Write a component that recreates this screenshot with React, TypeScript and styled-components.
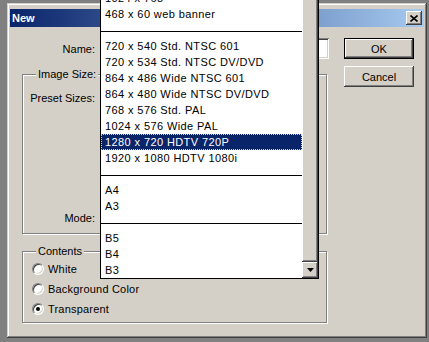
import React from 'react';
import styled, { createGlobalStyle } from 'styled-components';

const GlobalStyle = createGlobalStyle`
  html, body {
    margin: 0;
    padding: 0;
    background: #808080;
  }
  body {
    font-family: "Liberation Sans", Arial, sans-serif;
    font-size: 11px;
    color: #000;
  }
  #root {
    width: 429px;
    height: 342px;
    overflow: hidden;
    padding-top: 3px;
    box-sizing: border-box;
  }
`;

const raised = `
  box-shadow: inset -1px -1px #404040, inset 1px 1px #fff,
    inset -2px -2px #808080, inset 2px 2px #d4d0c8;
`;

const sunken = `
  box-shadow: inset 1px 1px #808080, inset -1px -1px #fff,
    inset 2px 2px #404040, inset -2px -2px #d4d0c8;
`;

const Dialog = styled.div`
  position: relative;
  box-sizing: border-box;
  width: 420px;
  height: 335px;
  margin-left: 7px;
  padding: 6px 3px 3px;
  background: #d4d0c8;
  box-shadow: inset -1px -1px #404040, inset 1px 1px #d4d0c8,
    inset -2px -2px #808080, inset 2px 2px #fff;
`;

const TitleBar = styled.div`
  height: 18px;
  display: flex;
  align-items: center;
  justify-content: space-between;
  padding: 0 2px;
  background: linear-gradient(to right, #0a246a, #a6caf0);
  color: #fff;
  font-weight: bold;
`;

const CloseButton = styled.button`
  width: 16px;
  height: 14px;
  padding: 0;
  border: none;
  background: #d4d0c8;
  display: flex;
  align-items: center;
  justify-content: center;
  ${raised}
`;

const Body = styled.div`
  display: flex;
`;

const LeftCol = styled.div`
  width: 334px;
  padding-top: 11px;
`;

const Row = styled.div<{ $indent?: number }>`
  display: flex;
  align-items: center;
  height: 21px;
  gap: 5px;
  padding-left: ${(p) => p.$indent ?? 0}px;
`;

const Label = styled.label<{ $w: number }>`
  width: ${(p) => p.$w}px;
  flex-shrink: 0;
  text-align: right;
  white-space: nowrap;
`;

// fields under the open list are left empty: the list hides them
const TextField = styled.div<{ $w: number }>`
  box-sizing: border-box;
  width: ${(p) => p.$w}px;
  height: 21px;
  background: #fff;
  ${sunken}
`;

const Group = styled.fieldset<{ $top: number }>`
  box-sizing: border-box;
  width: 305px;
  margin: ${(p) => p.$top}px 0 0 12px;
  padding: 0;
  border: 1px solid #808080;
  box-shadow: 1px 1px 0 #fff, inset 1px 1px 0 #fff;
  min-inline-size: 0;
`;

const Legend = styled.legend`
  margin-left: 13px;
  padding: 0 2px;
  line-height: 13px;
  background: #d4d0c8;
`;

const GroupRows = styled.div<{ $pt: number; $pb: number; $gap: number }>`
  display: flex;
  flex-direction: column;
  gap: ${(p) => p.$gap}px;
  padding: ${(p) => p.$pt}px 0 ${(p) => p.$pb}px;
`;

const RadioRow = styled.div`
  display: flex;
  align-items: center;
  height: 16px;
  padding-left: 9px;
  gap: 4px;
  letter-spacing: 0.2px;
`;

const RadioCircle = styled.span<{ $checked?: boolean }>`
  box-sizing: border-box;
  width: 12px;
  height: 12px;
  border-radius: 50%;
  background: #fff;
  border: 1px solid;
  border-color: #808080 #fff #fff #808080;
  box-shadow: inset 1px 1px #404040, inset -1px -1px #d4d0c8;
  display: flex;
  align-items: center;
  justify-content: center;
  &::after {
    content: '';
    display: ${(p) => (p.$checked ? 'block' : 'none')};
    width: 4px;
    height: 4px;
    border-radius: 50%;
    background: #000;
  }
`;

const RightCol = styled.div`
  display: flex;
  flex-direction: column;
  gap: 7px;
  padding-top: 11px;
`;

const PushButton = styled.button<{ $default?: boolean }>`
  box-sizing: border-box;
  width: 70px;
  height: 21px;
  padding: 0;
  font: inherit;
  color: #000;
  background: #d4d0c8;
  border: ${(p) => (p.$default ? '1px solid #000' : 'none')};
  ${raised}
`;

const DropList = styled.div`
  position: absolute;
  left: 93px;
  top: -14px;
  width: 219px;
  box-sizing: border-box;
  border: 1px solid #000;
  background: #fff;
  display: flex;
`;

const Items = styled.div`
  flex: 1;
`;

const Item = styled.div<{ $selected?: boolean }>`
  box-sizing: border-box;
  height: 16px;
  line-height: 16px;
  padding-left: 4px;
  letter-spacing: 0.4px;
  white-space: nowrap;
  background: ${(p) => (p.$selected ? '#0a246a' : 'transparent')};
  color: ${(p) => (p.$selected ? '#fff' : '#000')};
  outline: ${(p) => (p.$selected ? '1px dotted #e8d48c' : 'none')};
  outline-offset: -1px;
`;

const Separator = styled.div`
  height: 16px;
  box-sizing: border-box;
  padding-top: 9px;
  &::before {
    content: '';
    display: block;
    height: 1px;
    background: #000;
  }
`;

const ScrollBar = styled.div`
  width: 16px;
  display: flex;
  flex-direction: column;
`;

const Thumb = styled.div`
  flex: 1;
  background: #d4d0c8;
  ${raised}
`;

const ArrowButton = styled.div`
  height: 16px;
  background: #d4d0c8;
  display: flex;
  align-items: center;
  justify-content: center;
  ${raised}
`;

const presets: (string | null)[] = [
  '1024 x 768',
  '468 x 60 web banner',
  null,
  '720 x 540 Std. NTSC 601',
  '720 x 534 Std. NTSC DV/DVD',
  '864 x 486 Wide NTSC 601',
  '864 x 480 Wide NTSC DV/DVD',
  '768 x 576 Std. PAL',
  '1024 x 576 Wide PAL',
  '1280 x 720 HDTV 720P',
  '1920 x 1080 HDTV 1080i',
  null,
  'A4',
  'A3',
  null,
  'B5',
  'B4',
  'B3',
];

export default function App() {
  return (
    <>
      <GlobalStyle />
      <Dialog>
        <TitleBar>
          <span>New</span>
          <CloseButton>
            <svg width="8" height="7" viewBox="0 0 8 7">
              <path d="M0.5 0.5 L7.5 6.5 M7.5 0.5 L0.5 6.5" stroke="#000" strokeWidth="1.6" />
            </svg>
          </CloseButton>
        </TitleBar>
        <Body>
          <LeftCol>
            <Row>
              <Label $w={85}>Name:</Label>
              <TextField $w={229} />
            </Row>
            <Group $top={9}>
              <Legend>Image Size:</Legend>
              <GroupRows $pt={6} $pb={5} $gap={8}>
                <Row>
                  <Label $w={72}>Preset Sizes:</Label>
                  <TextField $w={200} />
                </Row>
                <Row $indent={142} style={{ marginTop: 4 }}>
                  <TextField $w={70} />
                </Row>
                <Row $indent={142}>
                  <TextField $w={70} />
                </Row>
                <Row $indent={142}>
                  <TextField $w={70} />
                </Row>
                <Row>
                  <Label $w={72}>Mode:</Label>
                  <TextField $w={120} />
                </Row>
              </GroupRows>
            </Group>
            <Group $top={11}>
              <Legend>Contents</Legend>
              <GroupRows $pt={3} $pb={5} $gap={4}>
                <RadioRow>
                  <RadioCircle />
                  White
                </RadioRow>
                <RadioRow>
                  <RadioCircle />
                  Background Color
                </RadioRow>
                <RadioRow>
                  <RadioCircle $checked />
                  Transparent
                </RadioRow>
              </GroupRows>
            </Group>
          </LeftCol>
          <RightCol>
            <PushButton $default>OK</PushButton>
            <PushButton>Cancel</PushButton>
          </RightCol>
        </Body>
        <DropList>
          <Items>
            {presets.map((p, i) =>
              p === null ? (
                <Separator key={i} />
              ) : (
                <Item key={i} $selected={p === '1280 x 720 HDTV 720P'}>
                  {p}
                </Item>
              )
            )}
          </Items>
          <ScrollBar>
            <Thumb />
            <ArrowButton>
              <svg width="7" height="4" viewBox="0 0 7 4">
                <path d="M0 0 H7 L3.5 4 Z" fill="#000" />
              </svg>
            </ArrowButton>
          </ScrollBar>
        </DropList>
      </Dialog>
    </>
  );
}
